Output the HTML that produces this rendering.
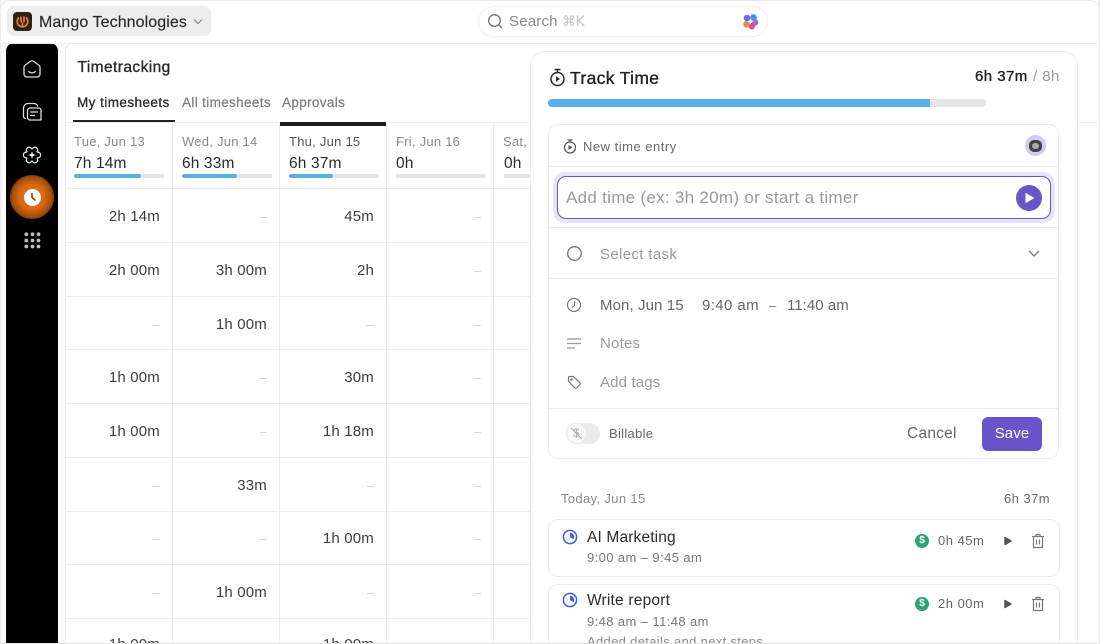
<!DOCTYPE html>
<html><head><meta charset="utf-8">
<style>
*{box-sizing:border-box}
html,body{margin:0;padding:0;width:1100px;height:644px;overflow:hidden;background:#fff;font-family:"Liberation Sans","Noto Sans CJK SC",sans-serif}
.a{position:absolute;white-space:nowrap}
#frame{position:absolute;left:0;top:0;width:1100px;height:644px;overflow:hidden;background:#fbfbfb}
.v{position:absolute;width:1px;background:#ececec}
.h{position:absolute;height:1px;background:#ececec}
.c{position:absolute;white-space:nowrap;font-size:15px;color:#3d3d3d;text-align:right;width:90px;letter-spacing:.18px}
.d{color:#cfcfcf;font-size:13px;padding-top:1px}
.day{position:absolute;white-space:nowrap;font-size:13px;color:#8a8a8a;letter-spacing:.25px}
.tot{position:absolute;white-space:nowrap;font-size:15.5px;color:#2b2b2b;letter-spacing:.15px}
.bar{position:absolute;height:4px;border-radius:2px;background:#e6e6e6;width:90px;top:174px;overflow:hidden}
.bar i{display:block;height:4px;background:#5aaeea;border-radius:2px}
.card{position:absolute;background:#fff;border:1px solid #ececec;border-radius:10px}
.g{color:#9a9a9a}
</style></head><body>
<div id="frame">
<div class="a" style="left:6px;top:43px;width:52px;height:610px;background:#000;border-radius:8px 8px 0 0"></div>
<div class="a" style="left:65px;top:43px;width:1040px;height:610px;background:#fff;border:1px solid #ececec;border-radius:8px 0 0 0"></div>
<div class="a" style="left:0;top:0;width:1100px;height:43px;background:#fff;border:1px solid #e8e8e8;border-bottom:none;border-radius:10px 10px 0 0"></div>
<div class="a" style="left:0;top:43px;width:1100px;height:1px;background:#ececec"></div>
<div class="h" style="left:1078px;top:122px;width:22px"></div>
<div class="a" style="left:7px;top:6px;width:204px;height:30px;background:#ededed;border-radius:7px"></div>
<div class="a" style="left:13px;top:12px;width:19px;height:19px;background:#2d2118;border-radius:4px"></div>
<svg class="a" style="left:13px;top:12px" width="19" height="19" viewBox="0 0 19 19" fill="none" stroke="#f0862a" stroke-width="1.6"><path d="M6 5.500a5.300 5.300 0 1 0 7 0"/><path d="M8 4.500v6M11 4.500v6M9.500 10.500v5"/></svg>
<div class="a" style="left:39px;top:12.500px;font-size:16px;line-height:20px;color:#2a2a2a;letter-spacing:.08px;-webkit-text-stroke:.15px #2a2a2a">Mango Technologies</div>
<svg class="a" style="left:192px;top:18px" width="12" height="8" viewBox="0 0 12 8" fill="none" stroke="#8a8a8a" stroke-width="1.2"><path d="M2 1.500l4 4 4-4"/></svg>
<div class="a" style="left:478px;top:6px;width:290px;height:31px;background:#fff;border:1px solid #f0f0f0;border-radius:16px"></div>
<svg class="a" style="left:487px;top:13px" width="17" height="17" viewBox="0 0 17 17" fill="none" stroke="#777" stroke-width="1.400"><circle cx="7.500" cy="7.500" r="5.800"/><path d="M12 12l3.200 3.200"/></svg>
<div class="a" style="left:509px;top:13px;font-size:15px;line-height:18px;color:#8a8a8a;letter-spacing:.2px">Search</div>
<div class="a" style="left:562px;top:13px;font-size:14px;line-height:18px;color:#c4c4c4;font-family:'DejaVu Sans',sans-serif;letter-spacing:-.5px">⌘K</div>
<svg class="a" style="left:742px;top:13px" width="17" height="17" viewBox="0 0 17 17"><circle cx="5" cy="5" r="3.300" fill="#6d6fdc"/><circle cx="11.500" cy="4.500" r="3.300" fill="#4a8ee8"/><circle cx="13.200" cy="9.500" r="3.200" fill="#8c6fe0"/><circle cx="9.800" cy="13.200" r="3.200" fill="#e0527e"/><circle cx="4.500" cy="11.300" r="3.300" fill="#ec8a4e"/><path d="M8.500 5.500l.9 2.100 2.100.9-2.100.9-.9 2.100-.9-2.100-2.100-.9 2.100-.9z" fill="#fff"/></svg>

<svg class="a" style="left:22px;top:59px" width="20" height="20" viewBox="0 0 20 20" fill="none" stroke="#ddd" stroke-width="1.300" stroke-linejoin="round"><path d="M2 8.500c0-1 .4-1.800 1.200-2.400L8 2.500c1.200-.9 2.800-.9 4 0l4.800 3.600c.8.600 1.200 1.400 1.200 2.400V15a3 3 0 0 1-3 3H5a3 3 0 0 1-3-3z"/><path d="M6.500 12.500c2 1.800 5 1.800 7 0" stroke-linecap="round"/></svg>
<svg class="a" style="left:22px;top:102px" width="21" height="20" viewBox="0 0 21 20" fill="none" stroke="#ddd" stroke-width="1.300" stroke-linejoin="round"><path d="M4 16.500c-1.500 0-2.500-.8-2.500-2V6A4.500 4.500 0 0 1 6 1.500h6A4.500 4.500 0 0 1 16 4.500"/><path d="M8 6h8.500A2.500 2.500 0 0 1 19 8.500V18h-11A2.500 2.500 0 0 1 5.500 15.500V8.500A2.500 2.500 0 0 1 8 6z"/><path d="M8.500 10h7M8.500 13.500h4" stroke-linecap="round"/></svg>
<svg class="a" style="left:22px;top:145px" width="20" height="20" viewBox="0 0 20 20" fill="none" stroke="#ddd" stroke-width="1.300"><path d="M10 4.500A2.900 2.900 0 1 1 14.800 7.250A2.900 2.900 0 1 1 14.800 12.750A2.900 2.900 0 1 1 10 15.500A2.900 2.900 0 1 1 5.200 12.750A2.900 2.900 0 1 1 5.200 7.250A2.900 2.900 0 1 1 10 4.500z"/><path d="M10 6.200l1.100 2.700 2.700 1.100-2.700 1.100-1.100 2.700-1.100-2.700-2.700-1.100 2.700-1.100z" fill="#ddd" stroke="none"/></svg>
<div class="a" style="left:10px;top:175px;width:44px;height:44px;border-radius:50%;background:radial-gradient(circle,#e8761c 0%,#d9690f 40%,#a84e0c 62%,#5a2a06 82%,#000 100%)"></div>
<div class="a" style="left:24px;top:189px;width:17px;height:17px;border-radius:50%;background:#fff"></div>
<svg class="a" style="left:24px;top:189px" width="17" height="17" viewBox="0 0 17 17" fill="none" stroke="#7a3a10" stroke-width="1.500" stroke-linecap="round"><path d="M8 4.500v4l3 2.500"/></svg>
<svg class="a" style="left:24px;top:232px" width="17" height="17" viewBox="0 0 17 17" fill="#bdbdbd"><circle cx="2.300" cy="2.300" r="1.900"/><circle cx="8.500" cy="2.300" r="1.900"/><circle cx="14.500" cy="2.300" r="1.900"/><circle cx="2.300" cy="8.500" r="1.900"/><circle cx="8.500" cy="8.500" r="1.900"/><circle cx="14.500" cy="8.500" r="1.900"/><circle cx="2.300" cy="14.500" r="1.900"/><circle cx="8.500" cy="14.500" r="1.900"/><circle cx="14.500" cy="14.500" r="1.900"/></svg>

<div class="a" style="left:77.500px;top:58px;font-size:15.500px;line-height:19px;color:#2a2a2a;-webkit-text-stroke:.35px #2a2a2a;letter-spacing:.42px">Timetracking</div>
<div class="a" style="left:77px;top:95px;font-size:13.500px;line-height:16px;color:#2b2b2b;-webkit-text-stroke:.3px #2b2b2b;letter-spacing:.44px">My timesheets</div>
<div class="a" style="left:182px;top:95px;font-size:13.500px;line-height:16px;color:#7d7d7d;-webkit-text-stroke:.25px #7d7d7d;letter-spacing:.35px">All timesheets</div>
<div class="a" style="left:282px;top:95px;font-size:13.500px;line-height:16px;color:#7d7d7d;-webkit-text-stroke:.25px #7d7d7d;letter-spacing:.35px">Approvals</div>
<div class="a" style="left:73px;top:120px;width:102px;height:2px;background:#222"></div>
<div class="h" style="left:65px;top:122px;width:470px"></div>
<div class="a" style="left:280px;top:122px;width:107px;height:4px;background:#1c1c1c"></div>

<div class="v" style="left:172px;top:122px;height:530px"></div>
<div class="v" style="left:279px;top:122px;height:530px"></div>
<div class="v" style="left:386px;top:122px;height:530px"></div>
<div class="v" style="left:493px;top:122px;height:530px"></div>
<div class="h" style="left:65px;top:188px;width:470px"></div>
<div class="h" style="left:65px;top:242px;width:470px"></div>
<div class="h" style="left:65px;top:296px;width:470px"></div>
<div class="h" style="left:65px;top:349px;width:470px"></div>
<div class="h" style="left:65px;top:403px;width:470px"></div>
<div class="h" style="left:65px;top:457px;width:470px"></div>
<div class="h" style="left:65px;top:511px;width:470px"></div>
<div class="h" style="left:65px;top:564px;width:470px"></div>
<div class="h" style="left:65px;top:618px;width:470px"></div>

<div class="day" style="left:74px;top:134px">Tue, Jun 13</div>
<div class="day" style="left:182px;top:134px">Wed, Jun 14</div>
<div class="day" style="left:289px;top:134px;color:#555">Thu, Jun 15</div>
<div class="day" style="left:396px;top:134px">Fri, Jun 16</div>
<div class="day" style="left:503px;top:134px">Sat, Jun 17</div>
<div class="tot" style="left:74px;top:155px">7h 14m</div>
<div class="tot" style="left:182px;top:155px">6h 33m</div>
<div class="tot" style="left:289px;top:155px">6h 37m</div>
<div class="tot" style="left:396px;top:155px">0h</div>
<div class="tot" style="left:504px;top:155px">0h</div>
<div class="bar" style="left:74px"><i style="width:67px"></i></div>
<div class="bar" style="left:182px"><i style="width:55px"></i></div>
<div class="bar" style="left:289px"><i style="width:44px"></i></div>
<div class="bar" style="left:396px"></div>
<div class="bar" style="left:504px"></div>

<div class="c" style="left:70px;top:208px">2h 14m</div><div class="c d" style="left:177px;top:208px">–</div><div class="c" style="left:284px;top:208px">45m</div><div class="c d" style="left:391px;top:208px">–</div>
<div class="c" style="left:70px;top:262px">2h 00m</div><div class="c" style="left:177px;top:262px">3h 00m</div><div class="c" style="left:284px;top:262px">2h</div><div class="c d" style="left:391px;top:262px">–</div>
<div class="c d" style="left:70px;top:316px">–</div><div class="c" style="left:177px;top:316px">1h 00m</div><div class="c d" style="left:284px;top:316px">–</div><div class="c d" style="left:391px;top:316px">–</div>
<div class="c" style="left:70px;top:369px">1h 00m</div><div class="c d" style="left:177px;top:369px">–</div><div class="c" style="left:284px;top:369px">30m</div><div class="c d" style="left:391px;top:369px">–</div>
<div class="c" style="left:70px;top:423px">1h 00m</div><div class="c d" style="left:177px;top:423px">–</div><div class="c" style="left:284px;top:423px">1h 18m</div><div class="c d" style="left:391px;top:423px">–</div>
<div class="c d" style="left:70px;top:477px">–</div><div class="c" style="left:177px;top:477px">33m</div><div class="c d" style="left:284px;top:477px">–</div><div class="c d" style="left:391px;top:477px">–</div>
<div class="c d" style="left:70px;top:530px">–</div><div class="c d" style="left:177px;top:530px">–</div><div class="c" style="left:284px;top:530px">1h 00m</div><div class="c d" style="left:391px;top:530px">–</div>
<div class="c d" style="left:70px;top:584px">–</div><div class="c" style="left:177px;top:584px">1h 00m</div><div class="c d" style="left:284px;top:584px">–</div><div class="c d" style="left:391px;top:584px">–</div>
<div class="c" style="left:70px;top:636px">1h 00m</div><div class="c d" style="left:177px;top:636px">–</div><div class="c" style="left:284px;top:636px">1h 00m</div><div class="c d" style="left:391px;top:636px">–</div>

<div class="a" style="left:530px;top:51px;width:548px;height:610px;background:#fff;border:1px solid #ececec;border-radius:14px"></div>
<svg class="a" style="left:549px;top:68px" width="17" height="19" viewBox="0 0 17 19" fill="none" stroke="#2a2a2a" stroke-width="1.500"><circle cx="8.500" cy="11" r="6.500"/><path d="M5.500 1.500h6M8.500 1.500v3"/><path d="M7 8.300l4 2.700-4 2.700z" fill="#2a2a2a" stroke="none"/></svg>
<div class="a" style="left:570px;top:68px;font-size:17.500px;line-height:20px;color:#222;-webkit-text-stroke:.35px #222;letter-spacing:.35px">Track Time</div>
<div class="a" style="left:975px;top:68px;font-size:15px;line-height:18px;color:#222;-webkit-text-stroke:.35px #222;letter-spacing:.45px">6h 37m</div>
<div class="a" style="left:1033px;top:68px;font-size:15px;line-height:18px;color:#9a9a9a;letter-spacing:.45px">/ 8h</div>
<div class="a" style="left:548px;top:99px;width:438px;height:8px;background:#e5e5e5;border-radius:4px"></div>
<div class="a" style="left:548px;top:99px;width:382px;height:8px;background:#5aaeea;border-radius:4px 0 0 4px"></div>

<div class="card" style="left:548px;top:124px;width:511px;height:335px"></div>
<div class="h" style="left:549px;top:166px;width:509px"></div>
<svg class="a" style="left:563px;top:139px" width="14" height="15" viewBox="0 0 14 15" fill="none" stroke="#555" stroke-width="1.200"><circle cx="7" cy="8.500" r="5.500"/><path d="M4.500 1h5M7 1v2"/><path d="M5.500 6l4 2.500-4 2.500z" fill="#555" stroke="none"/></svg>
<div class="a" style="left:583px;top:139px;font-size:13px;line-height:15px;color:#6a6a6a;letter-spacing:.5px">New time entry</div>
<div class="a" style="left:1025px;top:135px;width:21px;height:21px;border-radius:50%;background:#d3cbf0"></div>
<div class="a" style="left:1029px;top:140px;width:13px;height:12px;border-radius:5px;background:#444"></div>
<div class="a" style="left:1032px;top:143px;width:7px;height:6px;border-radius:3px;background:#aaa"></div>

<div class="a" style="left:553px;top:172px;width:502px;height:51px;border-radius:12px;background:#e9e4f9"></div>
<div class="a" style="left:557px;top:176px;width:494px;height:43px;border-radius:9px;background:#fff;border:1.500px solid #6a54c9"></div>
<div class="a" style="left:566px;top:188px;font-size:17px;line-height:20px;color:#9a9a9a;letter-spacing:.29px">Add time (ex: 3h 20m) or start a timer</div>
<div class="a" style="left:1016px;top:185px;width:26px;height:26px;border-radius:50%;background:#6a54c9"></div>
<svg class="a" style="left:1024px;top:192px" width="12" height="12" viewBox="0 0 12 12"><path d="M2 1.500l7.500 4.500L2 10.500z" fill="#fff" stroke="#fff" stroke-linejoin="round"/></svg>
<div class="h" style="left:549px;top:227px;width:509px"></div>
<svg class="a" style="left:566px;top:245px" width="17" height="17" viewBox="0 0 17 17" fill="none" stroke="#777" stroke-width="1.300"><circle cx="8.500" cy="8.500" r="6.800"/></svg>
<div class="a" style="left:600px;top:246px;font-size:15px;line-height:18px;color:#9a9a9a;letter-spacing:.35px">Select task</div>
<svg class="a" style="left:1027px;top:249px" width="14" height="10" viewBox="0 0 14 10" fill="none" stroke="#777" stroke-width="1.300"><path d="M2 2l5 5 5-5"/></svg>
<div class="h" style="left:549px;top:278px;width:509px"></div>
<svg class="a" style="left:566px;top:297px" width="16" height="16" viewBox="0 0 16 16" fill="none" stroke="#777" stroke-width="1.200"><circle cx="8" cy="8" r="6.500"/><path d="M8.500 4v4.500L6 10.500"/></svg>
<div class="a" style="left:600px;top:297px;font-size:15px;line-height:18px;color:#666;letter-spacing:.1px">Mon, Jun 15</div>
<div class="a" style="left:702px;top:297px;font-size:15px;line-height:18px;color:#666;letter-spacing:.4px">9:40 am</div>
<div class="a" style="left:769px;top:297px;font-size:13px;line-height:18px;color:#777">–</div>
<div class="a" style="left:787px;top:297px;font-size:15px;line-height:18px;color:#666;letter-spacing:.05px">11:40 am</div>
<svg class="a" style="left:567px;top:337px" width="14" height="13" viewBox="0 0 14 13" fill="none" stroke="#999" stroke-width="1.200"><path d="M0 2h14M0 6.500h14M0 11h8"/></svg>
<div class="a" style="left:600px;top:335px;font-size:15px;line-height:18px;color:#9a9a9a;letter-spacing:.2px">Notes</div>
<svg class="a" style="left:567px;top:375px" width="15" height="15" viewBox="0 0 15 15" fill="none" stroke="#777" stroke-width="1.200" stroke-linejoin="round"><path d="M1.500 2.500a1 1 0 0 1 1-1h4l6.500 6.500a1 1 0 0 1 0 1.400l-3.600 3.600a1 1 0 0 1-1.400 0L1.500 6.500z"/><circle cx="4.500" cy="4.500" r=".7"/></svg>
<div class="a" style="left:600px;top:374px;font-size:15px;line-height:18px;color:#9a9a9a;letter-spacing:.15px">Add tags</div>
<div class="h" style="left:549px;top:408px;width:509px"></div>
<div class="a" style="left:566px;top:423px;width:34px;height:21px;border-radius:11px;background:#ebebeb"></div>
<div class="a" style="left:566px;top:423px;width:21px;height:21px;border-radius:50%;background:#f8f8f8;border:1px solid #e8e8e8"></div>
<div class="a" style="left:573px;top:425px;font-size:12px;line-height:16px;color:#aaa">$</div>
<svg class="a" style="left:569px;top:426px" width="15" height="15" viewBox="0 0 15 15" fill="none" stroke="#aaa" stroke-width="1"><path d="M2 2l11 11"/></svg>
<div class="a" style="left:609px;top:426px;font-size:13px;line-height:15px;color:#666;letter-spacing:.3px">Billable</div>
<div class="a" style="left:907px;top:425px;font-size:15.500px;line-height:18px;color:#666;letter-spacing:.25px">Cancel</div>
<div class="a" style="left:982px;top:417px;width:60px;height:34px;border-radius:6px;background:#6a54c9;color:#fff;font-size:15px;line-height:34px;text-align:center;letter-spacing:.1px">Save</div>

<div class="a" style="left:561px;top:491px;font-size:13px;line-height:16px;color:#888;letter-spacing:.35px">Today, Jun 15</div>
<div class="a" style="left:1004px;top:491px;font-size:13px;line-height:16px;color:#666;letter-spacing:.45px">6h 37m</div>

<div class="card" style="left:548px;top:519px;width:512px;height:58px"></div>
<div class="card" style="left:548px;top:584px;width:512px;height:80px"></div>
<svg class="a" style="left:562px;top:529px" width="16" height="16" viewBox="0 0 16 16"><circle cx="8" cy="8" r="6.600" fill="none" stroke="#3f62d2" stroke-width="1.500"/><path d="M8 3.800A4.200 4.200 0 0 1 11.600 10.200L8 8z" fill="#3f62d2"/></svg>
<div class="a" style="left:587px;top:529px;font-size:15.500px;line-height:18px;color:#2a2a2a;letter-spacing:.15px">AI Marketing</div>
<div class="a" style="left:587px;top:550px;font-size:13px;line-height:16px;color:#777;letter-spacing:.4px">9:00 am – 9:45 am</div>
<svg class="a" style="left:562px;top:592px" width="16" height="16" viewBox="0 0 16 16"><circle cx="8" cy="8" r="6.600" fill="none" stroke="#3f62d2" stroke-width="1.500"/><path d="M8 3.800A4.200 4.200 0 0 1 11.600 10.200L8 8z" fill="#3f62d2"/></svg>
<div class="a" style="left:587px;top:592px;font-size:15.500px;line-height:18px;color:#2a2a2a;letter-spacing:.2px">Write report</div>
<div class="a" style="left:587px;top:613.500px;font-size:13px;line-height:16px;color:#777;letter-spacing:.4px">9:48 am – 11:48 am</div>
<div class="a" style="left:587px;top:634px;font-size:13px;line-height:16px;color:#888;letter-spacing:.33px">Added details and next steps</div>

<div class="a" style="left:915px;top:534px;width:14px;height:14px;border-radius:50%;background:#2ea56f;color:#fff;font-size:10px;line-height:14px;text-align:center;font-weight:bold">$</div>
<div class="a" style="left:938px;top:533px;font-size:13px;line-height:16px;color:#666;letter-spacing:.5px">0h 45m</div>
<svg class="a" style="left:1003px;top:535px" width="10" height="12" viewBox="0 0 10 12"><path d="M2 2.500L8 6l-6 3.500z" fill="#555" stroke="#555" stroke-width="1.500" stroke-linejoin="round"/></svg>
<svg class="a" style="left:1031px;top:533px" width="14" height="16" viewBox="0 0 14 16" fill="none" stroke="#777" stroke-width="1.200"><path d="M1 3.500h12M5 3.500V1.500h4v2M2.500 3.500v11h9v-11M5.500 6.500v5M8.500 6.500v5"/></svg>
<div class="a" style="left:915px;top:597px;width:14px;height:14px;border-radius:50%;background:#2ea56f;color:#fff;font-size:10px;line-height:14px;text-align:center;font-weight:bold">$</div>
<div class="a" style="left:938px;top:596px;font-size:13px;line-height:16px;color:#666;letter-spacing:.5px">2h 00m</div>
<svg class="a" style="left:1003px;top:598px" width="10" height="12" viewBox="0 0 10 12"><path d="M2 2.500L8 6l-6 3.500z" fill="#555" stroke="#555" stroke-width="1.500" stroke-linejoin="round"/></svg>
<svg class="a" style="left:1031px;top:596px" width="14" height="16" viewBox="0 0 14 16" fill="none" stroke="#777" stroke-width="1.200"><path d="M1 3.500h12M5 3.500V1.500h4v2M2.500 3.500v11h9v-11M5.500 6.500v5M8.500 6.500v5"/></svg>

<div class="a" style="left:0;top:643px;width:1100px;height:1px;background:#e4e4e4"></div>
<div class="a" style="left:1099px;top:0;width:1px;height:644px;background:#e4e4e4"></div>
<div class="a" style="left:0;top:0;width:1px;height:644px;background:#ececec"></div>
</div>
</body></html>
